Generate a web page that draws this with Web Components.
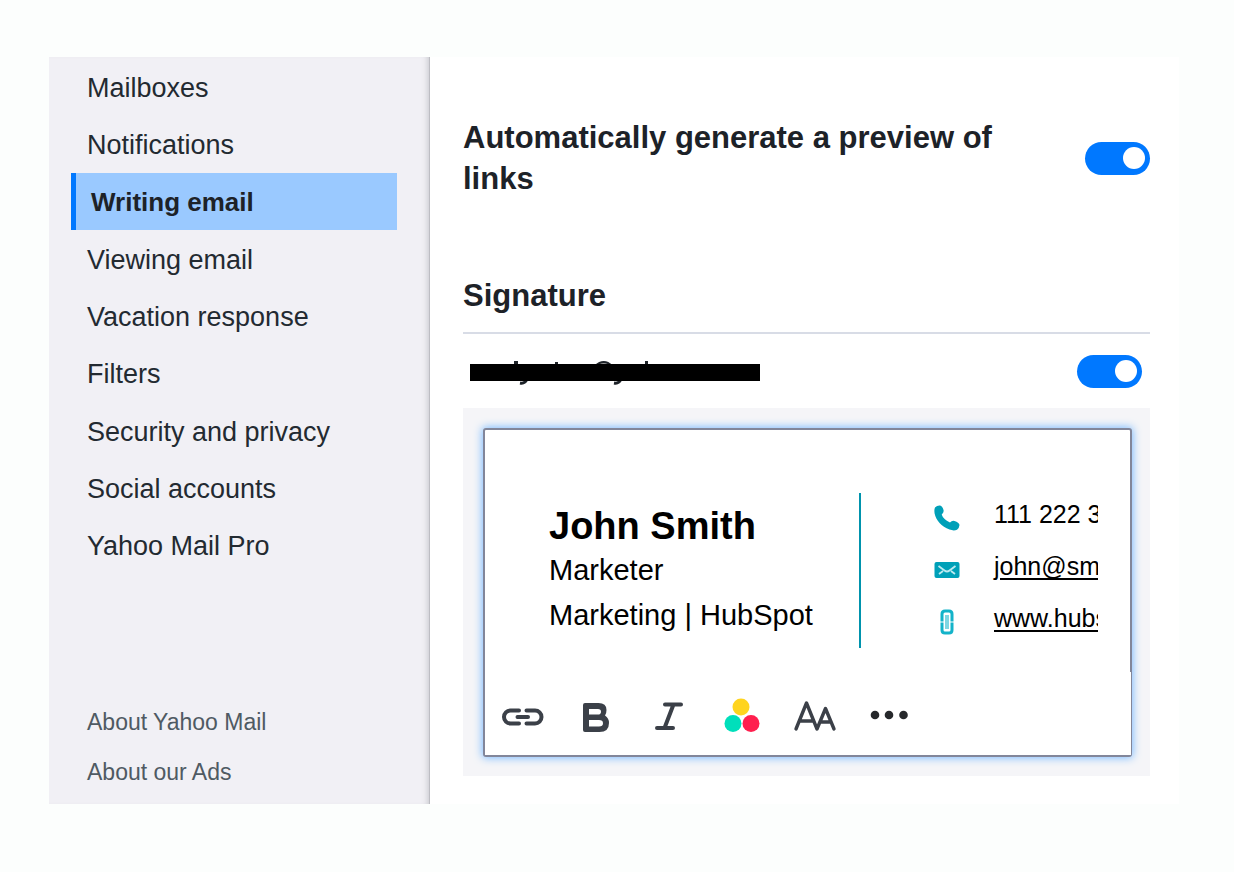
<!DOCTYPE html>
<html lang="en">
<head>
<meta charset="utf-8">
<title>Mail settings</title>
<style>
  html { background: #fcfefd; }
  body { margin: 0; font-family: "Liberation Sans", Arial, sans-serif; color: #1d2228; }
</style>
</head>
<body>
<settings-page>
  <settings-nav slot="nav">
    <nav-item href="#mailboxes">Mailboxes</nav-item>
    <nav-item href="#notifications">Notifications</nav-item>
    <nav-item href="#writing" active>Writing email</nav-item>
    <nav-item href="#viewing">Viewing email</nav-item>
    <nav-item href="#vacation">Vacation response</nav-item>
    <nav-item href="#filters">Filters</nav-item>
    <nav-item href="#security">Security and privacy</nav-item>
    <nav-item href="#social">Social accounts</nav-item>
    <nav-item href="#pro">Yahoo Mail Pro</nav-item>
    <nav-item slot="footer" href="#about" minor>About Yahoo Mail</nav-item>
    <nav-item slot="footer" href="#ads" minor>About our Ads</nav-item>
  </settings-nav>
  <writing-settings></writing-settings>
</settings-page>

<script>
const define = (name, html, setup) => customElements.define(name, class extends HTMLElement {
  constructor() {
    super();
    const t = document.createElement('template');
    t.innerHTML = html;
    this.attachShadow({ mode: 'open' }).append(t.content.cloneNode(true));
  }
  connectedCallback() { if (setup) setup(this, this.shadowRoot); }
});

define('nav-item', `
<style>
  :host { display: flex; }
  a { flex: 1; display: flex; align-items: center; padding: 2px 0 0 16px; color: #232a31; font-size: 27px; line-height: 32px; text-decoration: none; }
  :host([active]) a { background: #9ac9ff; border-left: 5px solid #0078ff; padding-left: 15px; font-size: 26px; font-weight: bold; color: #1d2228; }
  :host([minor]) a { padding-top: 0; font-size: 23px; color: #4f5a63; }
</style>
<a><slot></slot></a>`, (el, root) => {
  const a = root.querySelector('a');
  a.href = el.getAttribute('href');
  if (el.hasAttribute('active')) a.setAttribute('aria-current', 'page');
});

define('settings-nav', `
<style>
  :host { display: flex; flex-direction: column; justify-content: space-between; box-sizing: border-box; padding: 1px 33px 7px 22px; background: #f1f0f5; box-shadow: inset -1px 0 0 #bdbdc3, inset -7px 0 6px -5px #c4c4ca; }
  nav { display: grid; grid-auto-rows: 1fr; min-height: 516px; }
  footer { display: grid; grid-auto-rows: 50px; }
</style>
<nav aria-label="Settings"><slot></slot></nav>
<footer><slot name="footer"></slot></footer>`);

define('settings-page', `
<style>
  :host { display: block; padding: 57px 55px 68px 49px; }
  main { display: grid; grid-template-columns: 381px minmax(0, 1fr); background: #fff; }
</style>
<main><slot name="nav"></slot><slot></slot></main>`);

define('toggle-switch', `
<style>
  :host { display: block; flex: none; }
  input { appearance: none; display: flex; align-items: center; justify-content: flex-end; box-sizing: border-box; width: 65px; height: 33px; margin: 0; padding: 0 5px; border-radius: 17px; background: #0078ff; cursor: pointer; }
  input::before { content: ""; width: 22px; height: 22px; border-radius: 50%; background: #fff; }
  input:not(:checked) { background: #b0b9c1; justify-content: flex-start; }
</style>
<input type="checkbox" role="switch" checked>`, (el, root) => {
  root.querySelector('input').setAttribute('aria-label', el.getAttribute('label'));
});

define('writing-settings', `
<style>
  :host { display: block; padding: 60px 29px 28px 33px; }
  h2 { margin: 0; font-size: 31px; line-height: 41px; }
  .preview { display: flex; align-items: center; justify-content: space-between; }
  .preview h2 { max-width: 560px; }
  .title { margin-top: 76px; padding-bottom: 16px; border-bottom: 2px solid #d8dce6; }
  .account { display: flex; align-items: center; justify-content: space-between; height: 74px; padding: 0 8px 0 7px; }
  .account svg { display: block; }
</style>
<section class="preview">
  <h2>Automatically generate a preview of links</h2>
  <toggle-switch label="Automatically generate a preview of links"></toggle-switch>
</section>
<h2 class="title">Signature</h2>
<div class="account">
  <svg width="290" height="28" viewBox="0 0 290 28" role="img" aria-label="Redacted address">
    <path d="M44 4h4v5h-4zM85 5h3v4h-3zM175 4h3v5h-3z" fill="#1d2228"/>
    <path d="M125 9q9-8 17 0" fill="#999" stroke="#1d2228" stroke-width="2"/>
    <path d="M57 22q-2 5-7 4M151 22q-2 5-7 4" fill="none" stroke="#1d2228" stroke-width="3"/>
    <rect y="7" width="290" height="17"/>
  </svg>
  <toggle-switch label="Use signature"></toggle-switch>
</div>
<signature-editor>
  <signature-card></signature-card>
</signature-editor>`);

define('signature-editor', `
<style>
  :host { display: block; padding: 20px 18px 19px 20px; background: #f5f5f8; }
  .box { border: 2px solid #82869a; border-radius: 3px; background: #fff; box-shadow: 0 0 9px 1px #7dbcff; }
  .content { padding: 63px 32px 24px 64px; }
  editor-toolbar { margin-right: -1px; background: #fff; }
</style>
<div class="box">
  <div class="content"><slot></slot></div>
  <editor-toolbar></editor-toolbar>
</div>`);

define('signature-card', `
<style>
  :host { display: flex; overflow: hidden; color: #000; height: 155px; white-space: nowrap; }
  .who { flex: none; width: 312px; box-sizing: border-box; padding-top: 11px; border-right: 2px solid #0093ad; }
  h3 { margin: 0; font-size: 38px; line-height: 44px; }
  p { margin: 0; font-size: 29px; line-height: 45px; }
  ul { list-style: none; margin: 0; padding: 0 0 0 73px; }
  li { display: flex; align-items: center; gap: 34px; height: 52px; box-sizing: border-box; padding-bottom: 2px; font-size: 25px; }
  li span, li a { line-height: 32px; padding-bottom: 8px; }
  a { color: #000; text-underline-offset: 3px; }
  svg { flex: none; display: block; }
</style>
<div class="who">
  <h3>John Smith</h3>
  <p>Marketer</p>
  <p>Marketing | HubSpot</p>
</div>
<ul>
  <li><svg width="26" height="26" viewBox="0 0 26 26" fill="#00a0b8" aria-hidden="true"><path d="M1 2.500Q3 .3 6 .500Q8.500 1 9.500 5Q10.200 7.500 7.700 9.500Q9 14 16 17.500Q18 15.300 20.500 16Q25 17.300 25.500 20Q25.300 23 23 24.700Q20 26.200 15.500 24.600C7.500 21.500 2 15.500.6 8.500Q0 4.500 1 2.500Z"/></svg><span>111 222 333</span></li>
  <li><svg width="26" height="26" viewBox="0 0 26 26" aria-hidden="true"><rect x=".5" y="5" width="25" height="16" rx="2" fill="#00a0b8"/><path d="M4.500 9l6 4.500q2.500 2 5 0l6-4.500M5 17l4-3M21 17l-4-3" fill="none" stroke="#bdeaf0" stroke-width="1.800"/></svg><a href="mailto:john@smith.com">john@smith.com</a></li>
  <li><svg width="26" height="26" viewBox="0 0 26 26" fill="none" stroke="#14b3c9" stroke-width="3" aria-hidden="true"><path d="M9.500 11H8V5q0-3 3-3h4q3 0 3 3v6h-1.500M9.500 15H8v6q0 3 3 3h4q3 0 3-3v-6h-1.500"/><path d="M13 6v14" stroke="#7fd6e2" stroke-width="4"/></svg><a href="#site">www.hubspot.com</a></li>
</ul>`);

define('editor-toolbar', `
<style>
  :host { display: flex; align-items: center; height: 83px; box-sizing: border-box; padding: 6px 16px 0; }
  button { display: block; margin: 0; padding: 0; border: 0; background: none; color: #3b4048; cursor: pointer; }
  svg { display: block; }
  .link { margin-right: 36px; } .bold { margin-right: 43px; } .italic { margin-right: 39px; }
  .colour { margin-right: 32px; } .size { margin-right: 32px; }
</style>
<button class="link" aria-label="Insert link"><svg width="44" height="44" viewBox="0 0 44 44" fill="none" stroke="currentColor" stroke-width="4" stroke-linecap="round"><path d="M18 15.500H9.500a6.500 6.500 0 0 0 0 13H18M25.500 15.500H34a6.500 6.500 0 0 1 0 13h-8.500M16.500 22h10.500"/></svg></button>
<button class="bold" aria-label="Bold"><svg width="30" height="44" viewBox="0 0 30 44"><path fill="currentColor" fill-rule="evenodd" d="M4 8H17.500Q25.500 8 25.500 15Q25.500 18.500 24 20.500Q28 23 28 28Q28 37 18.500 37H4Q2 37 2 35V10Q2 8 4 8ZM8 14V19.500H17Q20 19.500 20 16.700Q20 14 17 14ZM8 25V31.500H18Q22 31.500 22 28.200Q22 25 18 25Z"/></svg></button>
<button class="italic" aria-label="Italic"><svg width="30" height="44" viewBox="0 0 30 44" fill="none" stroke="currentColor" stroke-width="4" stroke-linecap="round"><path d="M11 9.500h16M3 33h16M19.500 9.500L10.500 33"/></svg></button>
<button class="colour" aria-label="Text colour"><svg width="38" height="44" viewBox="0 0 38 44"><circle cx="18" cy="12" r="8.500" fill="#ffd41f"/><circle cx="10" cy="28.500" r="8.500" fill="#00dfbb"/><circle cx="28" cy="28.500" r="8.500" fill="#ff1f4e"/></svg></button>
<button class="size" aria-label="Text size"><svg width="44" height="44" viewBox="0 0 44 44" fill="none" stroke="currentColor" stroke-width="3.400" stroke-linecap="round" stroke-linejoin="round"><path d="M3 34L13.500 8L24 34L32.500 13.500L41 34M6.500 26H20M27 27h10.500"/></svg></button>
<button class="more" aria-label="More options"><svg width="40" height="44" viewBox="0 0 40 44" fill="#26282b"><circle cx="6" cy="20" r="4.300"/><circle cx="20" cy="20" r="4.300"/><circle cx="34.500" cy="20" r="4.300"/></svg></button>`);
</script>
</body>
</html>
